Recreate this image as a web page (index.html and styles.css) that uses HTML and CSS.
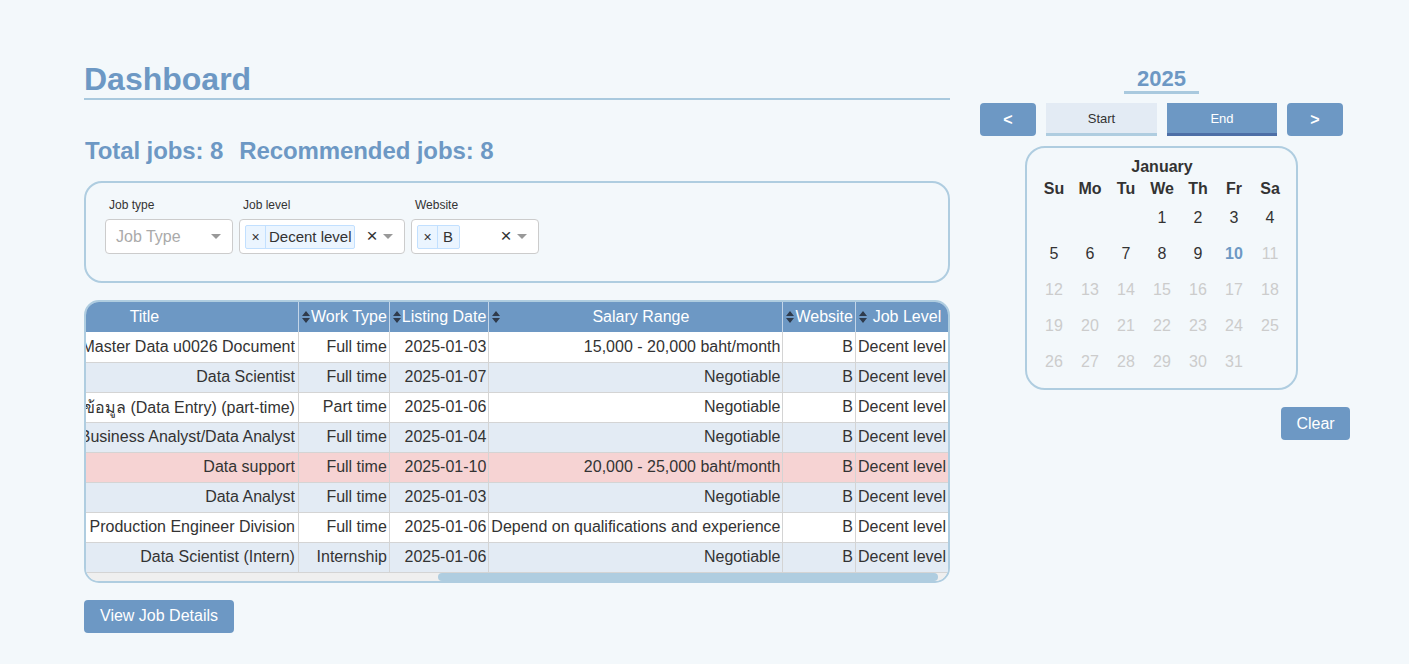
FILE: index.html
```html
<!DOCTYPE html>
<html lang="en">
<head>
<meta charset="utf-8">
<title>Dashboard</title>
<link rel="stylesheet" href="styles.css">
</head>
<body>
<div class="page">
  <div class="main">
    <h1 class="title">Dashboard</h1>
    <div class="stats">
      <span>Total jobs: 8</span>
      <span>Recommended jobs: 8</span>
    </div>

    <div class="filters">
      <div class="field">
        <label class="flabel">Job type</label>
        <div class="sel w128">
          <span class="placeholder">Job Type</span>
          <span class="caret"></span>
        </div>
      </div>
      <div class="field">
        <label class="flabel">Job level</label>
        <div class="sel w166">
          <span class="tag"><span class="tag-x">×</span><span class="tag-l">Decent level</span></span>
          <span class="clear">×</span>
          <span class="caret"></span>
        </div>
      </div>
      <div class="field">
        <label class="flabel">Website</label>
        <div class="sel w128">
          <span class="tag"><span class="tag-x">×</span><span class="tag-l tag-b">B</span></span>
          <span class="clear">×</span>
          <span class="caret"></span>
        </div>
      </div>
    </div>

    <div class="tablebox">
      <div class="scroll">
        <table class="jobs">
          <thead>
            <tr>
              <th><div class="spacer"></div></th>
              <th><div class="th-in twide"><svg class="sort" width="8" height="12" viewBox="0 0 8 12"><path d="M4 0L8 5H0Z M0 7H8L4 12Z"/></svg><span class="th-t">Title</span></div></th>
              <th><div class="th-in"><svg class="sort" width="8" height="12" viewBox="0 0 8 12"><path d="M4 0L8 5H0Z M0 7H8L4 12Z"/></svg><span class="th-t">Work Type</span></div></th>
              <th><div class="th-in"><svg class="sort" width="8" height="12" viewBox="0 0 8 12"><path d="M4 0L8 5H0Z M0 7H8L4 12Z"/></svg><span class="th-t">Listing Date</span></div></th>
              <th><div class="th-in"><svg class="sort" width="8" height="12" viewBox="0 0 8 12"><path d="M4 0L8 5H0Z M0 7H8L4 12Z"/></svg><span class="th-t">Salary Range</span></div></th>
              <th><div class="th-in"><svg class="sort" width="8" height="12" viewBox="0 0 8 12"><path d="M4 0L8 5H0Z M0 7H8L4 12Z"/></svg><span class="th-t">Website</span></div></th>
              <th><div class="th-in"><svg class="sort" width="8" height="12" viewBox="0 0 8 12"><path d="M4 0L8 5H0Z M0 7H8L4 12Z"/></svg><span class="th-t">Job Level</span></div></th>
            </tr>
          </thead>
          <tbody>
            <tr>
              <td></td>
              <td><div class="tcell">Master Data u0026 Document</div></td>
              <td>Full time</td><td>2025-01-03</td><td>15,000 - 20,000 baht/month</td><td>B</td><td>Decent level</td>
            </tr>
            <tr class="alt">
              <td></td>
              <td><div class="tcell">Data Scientist</div></td>
              <td>Full time</td><td>2025-01-07</td><td>Negotiable</td><td>B</td><td>Decent level</td>
            </tr>
            <tr>
              <td></td>
              <td><div class="tcell">พนักงานบันทึกข้อมูล (Data Entry) (part-time)</div></td>
              <td>Part time</td><td>2025-01-06</td><td>Negotiable</td><td>B</td><td>Decent level</td>
            </tr>
            <tr class="alt">
              <td></td>
              <td><div class="tcell">Business Analyst/Data Analyst</div></td>
              <td>Full time</td><td>2025-01-04</td><td>Negotiable</td><td>B</td><td>Decent level</td>
            </tr>
            <tr class="hot">
              <td></td>
              <td><div class="tcell">Data support</div></td>
              <td>Full time</td><td>2025-01-10</td><td>20,000 - 25,000 baht/month</td><td>B</td><td>Decent level</td>
            </tr>
            <tr class="alt">
              <td></td>
              <td><div class="tcell">Data Analyst</div></td>
              <td>Full time</td><td>2025-01-03</td><td>Negotiable</td><td>B</td><td>Decent level</td>
            </tr>
            <tr>
              <td></td>
              <td><div class="tcell">Process Engineer - Production Engineer Division</div></td>
              <td>Full time</td><td>2025-01-06</td><td>Depend on qualifications and experience</td><td>B</td><td>Decent level</td>
            </tr>
            <tr class="alt">
              <td></td>
              <td><div class="tcell">Data Scientist (Intern)</div></td>
              <td>Internship</td><td>2025-01-06</td><td>Negotiable</td><td>B</td><td>Decent level</td>
            </tr>
          </tbody>
        </table>
      </div>
      <div class="hbar">
        <div class="hbar-pre"></div>
        <div class="hbar-thumb"></div>
      </div>
    </div>

    <button class="btn details">View Job Details</button>
  </div>

  <div class="side">
    <div class="year">2025</div>
    <div class="nav">
      <button class="btn navbtn">&lt;</button>
      <button class="tab tab-start">Start</button>
      <button class="tab tab-end">End</button>
      <button class="btn navbtn">&gt;</button>
    </div>
    <div class="cal">
      <div class="month">January</div>
      <div class="grid wk">
        <span>Su</span><span>Mo</span><span>Tu</span><span>We</span><span>Th</span><span>Fr</span><span>Sa</span>
      </div>
      <div class="grid days">
        <span></span><span></span><span></span>
        <span>1</span><span>2</span><span>3</span><span>4</span>
        <span>5</span><span>6</span><span>7</span><span>8</span><span>9</span><span class="today">10</span><span class="off">11</span>
        <span class="off">12</span><span class="off">13</span><span class="off">14</span><span class="off">15</span><span class="off">16</span><span class="off">17</span><span class="off">18</span>
        <span class="off">19</span><span class="off">20</span><span class="off">21</span><span class="off">22</span><span class="off">23</span><span class="off">24</span><span class="off">25</span>
        <span class="off">26</span><span class="off">27</span><span class="off">28</span><span class="off">29</span><span class="off">30</span><span class="off">31</span>
      </div>
    </div>
    <button class="btn clearbtn">Clear</button>
  </div>
</div>
</body>
</html>
```

FILE: styles.css
```css
* { box-sizing: border-box; }

body {
  margin: 0;
  background: #f3f8fb;
  font-family: "Liberation Sans", Arial, "Noto Sans", sans-serif;
  color: #333;
}

.page {
  display: flex;
  align-items: flex-start;
  gap: 23px;
  padding: 61px 0 0 84px;
}

.main {
  width: 866px;
  display: flex;
  flex-direction: column;
  align-items: flex-start;
}

.title {
  align-self: stretch;
  margin: 0;
  font-size: 32px;
  line-height: 37px;
  font-weight: bold;
  color: #6d98c4;
  border-bottom: 2px solid #a9c9de;
}

.stats {
  margin-top: 37px;
  display: flex;
  gap: 16px;
  font-size: 24px;
  line-height: 28px;
  font-weight: bold;
  color: #6d98c4;
  padding-left: 1px;
  letter-spacing: -0.1px;
}

.filters {
  align-self: stretch;
  margin-top: 16px;
  height: 102px;
  border: 2px solid #afcde0;
  border-radius: 18px;
  padding: 15px 19px 0;
  display: flex;
  gap: 6px;
}

.field {
  display: flex;
  flex-direction: column;
}

.flabel {
  font-size: 12px;
  line-height: 15px;
  margin: 0 0 6px 4px;
  color: #333;
}

.sel {
  height: 35px;
  border: 1px solid #ccc;
  border-radius: 4px;
  background: #fff;
  display: flex;
  align-items: center;
  padding: 0 11px 0 5px;
}

.w128 { width: 128px; }
.w166 { width: 166px; }

.placeholder {
  font-size: 16px;
  color: #aaa;
  margin-left: 5px;
  flex: 1;
}

.tag {
  display: flex;
  align-items: stretch;
  height: 24px;
  background: #ebf5ff;
  border: 1px solid #c2e0ff;
  border-radius: 2px;
  color: #333;
}

.tag-x {
  width: 20px;
  display: flex;
  align-items: center;
  justify-content: center;
  font-size: 14px;
  border-right: 1px solid #c2e0ff;
}

.tag-l {
  display: flex;
  align-items: center;
  padding: 0 2px 0 3px;
  font-size: 15px;
}

.tag-b { padding: 0 6px 0 5px; }

.clear {
  margin-left: auto;
  width: 18px;
  text-align: center;
  font-size: 19px;
  line-height: 19px;
  color: #333;
  margin-top: -3px;
}

.caret {
  margin-left: 2px;
  width: 0;
  height: 0;
  border-left: 5px solid transparent;
  border-right: 5px solid transparent;
  border-top: 5px solid #999;
}

.sel .placeholder + .caret { margin-left: 0; }

.tablebox {
  align-self: stretch;
  margin-top: 17px;
  border: 2px solid #afcde0;
  border-radius: 15px;
  overflow: hidden;
  background: #f3f8fb;
}

.scroll {
  overflow: hidden;
  direction: rtl;
}

.jobs {
  direction: ltr;
  border-collapse: collapse;
  font-size: 16px;
  white-space: nowrap;
}

.jobs th {
  height: 30px;
  padding: 0 2px 0 3px;
  background: #6d98c4;
  color: #fff;
  font-weight: normal;
  border-left: 1px solid #c3d5e8;
}

.jobs th:first-child { border-left: none; }

.th-in {
  display: flex;
  align-items: center;
}

.sort {
  flex: none;
  margin-right: 1px;
  fill: #2f3b4c;
}

.th-t {
  flex: 1;
  text-align: center;
}

.twide { width: 312px; }

.spacer { width: 517px; }

.jobs td {
  height: 30px;
  padding: 0 2px;
  text-align: right;
  border: 1px solid #d4d4d4;
  background: #fff;
  color: #333;
}

.jobs tbody tr:first-child td { border-top: none; }
.jobs td:first-child { border-left: none; }
.jobs td:last-child { border-right: none; }
.jobs tbody tr:last-child td { border-bottom: 1px solid #d4d4d4; }

.jobs tr.alt td { background: #e3ebf4; }
.jobs tr.hot td { background: #f6d3d3; }

.tcell {
  width: 312px;
  display: flex;
  justify-content: flex-end;
  overflow: hidden;
}

.hbar {
  height: 8px;
  display: flex;
  background: #efefef;
}

.hbar-pre {
  width: 352px;
  flex: none;
}

.hbar-thumb {
  width: 500px;
  flex: none;
  background: #afcde0;
  border-radius: 4px;
}

.btn {
  border: none;
  border-radius: 4px;
  background: #6d98c4;
  color: #fff;
  font-family: inherit;
  font-size: 16px;
  height: 33px;
  padding: 0;
  cursor: pointer;
}

.details {
  margin-top: 17px;
  width: 150px;
}

.side {
  width: 377px;
  margin-top: 5px;
  display: flex;
  flex-direction: column;
  align-items: center;
}

.year {
  font-size: 22px;
  line-height: 25px;
  font-weight: bold;
  color: #6d98c4;
  padding: 0 13px;
  border-bottom: 3px solid #a9c9de;
}

.nav {
  margin-top: 9px;
  display: flex;
  gap: 10px;
}

.navbtn {
  width: 56px;
  font-weight: bold;
}

.tab {
  width: 111px;
  height: 33px;
  border: none;
  font-family: inherit;
  font-size: 13px;
  padding: 0;
}

.tab-start {
  background: #e3ebf4;
  color: #333;
  border-bottom: 3px solid #afcde0;
}

.tab-end {
  width: 110px;
  background: #6d98c4;
  color: #fff;
  border-bottom: 3px solid #4d6fa6;
}

.cal {
  margin-top: 10px;
  width: 273px;
  border: 2px solid #afcde0;
  border-radius: 20px;
  padding: 10px 8px 8px 9px;
}

.month {
  text-align: center;
  font-size: 16px;
  line-height: 18px;
  font-weight: bold;
  color: #333;
}

.grid {
  display: grid;
  grid-template-columns: repeat(7, 36px);
}

.grid span {
  text-align: center;
}

.wk {
  margin-top: 2px;
  font-size: 16px;
  font-weight: bold;
  line-height: 22px;
}

.days span {
  height: 36px;
  line-height: 36px;
  font-size: 16px;
  color: #333;
}

.days .today {
  color: #6d98c4;
  font-weight: bold;
}

.days .off { color: #ccc; }

.clearbtn {
  align-self: flex-end;
  margin-top: 17px;
  width: 69px;
}
```
